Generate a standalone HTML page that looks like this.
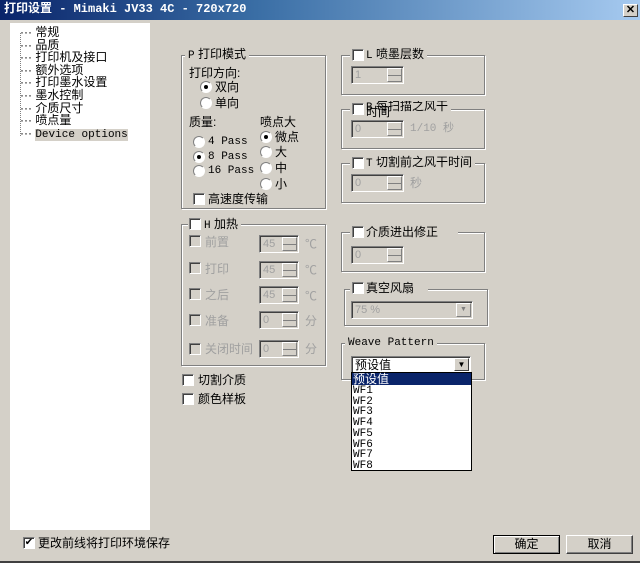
<!DOCTYPE html>
<html><head><meta charset="utf-8"><style>
*{margin:0;padding:0;box-sizing:border-box}
body{width:640px;height:563px;background:#d4d0c8;font:12px "Liberation Sans","Noto Sans CJK SC",sans-serif;color:#000;position:relative;overflow:hidden}
.a{position:absolute;white-space:nowrap;line-height:13px}
.mono{font-family:"Liberation Mono","Noto Sans CJK SC",monospace;font-size:11px}
.g{position:absolute;border:1px solid #808080;box-shadow:1px 1px 0 #fff, inset 1px 1px 0 #fff}
.lbl{position:absolute;background:#d4d0c8;padding:0 3px;line-height:13px;white-space:nowrap}
.cb{position:absolute;width:12px;height:12px;background:#fff;border:1px solid;border-color:#808080 #fff #fff #808080;box-shadow:inset 1px 1px 0 #404040}
.cb.dis{background:#d4d0c8}
.rd{position:absolute;width:12px;height:12px;border-radius:50%;background:#fff;border:1px solid;border-color:#808080 #fff #fff #808080}
.rd.on::after{content:"";position:absolute;left:3px;top:3px;width:4px;height:4px;border-radius:50%;background:#000}
.gr{color:#a0a0a0}
.sp{position:absolute;height:18px;background:#d4d0c8;border:1px solid;border-color:#808080 #fff #fff #808080;box-shadow:inset 1px 1px 0 #404040;font-size:11px;color:#a0a0a0;padding:2px 3px;line-height:12px}
.sp i{position:absolute;right:1px;top:1px;width:15px;height:14px;border:1px solid;border-color:#fff #808080 #808080 #fff;background:#d4d0c8}
.sp i::after{content:"";position:absolute;left:0;right:0;top:6px;border-top:1px solid #808080}
.sp b{position:absolute;right:1px;top:1px;width:15px;height:14px;border:1px solid;border-color:#fff #808080 #808080 #fff;background:#d4d0c8;font-size:7px;line-height:12px;text-align:center;color:#808080;font-weight:normal}
.btn{position:absolute;height:19px;border:1px solid #000;box-shadow:inset 1px 1px 0 #fff,inset -1px -1px 0 #808080;text-align:center;line-height:16px;font-size:12px}
</style></head><body>
<div style="position:absolute;left:0;top:0;width:640px;height:20px;background:linear-gradient(90deg,#0a246a,#3a6ea5 40%,#a6caf0)"></div>
<div class="a" style="left:4px;top:3px;color:#fff;font-weight:bold;font-size:12px;font-family:'Liberation Mono','Noto Sans CJK SC',monospace">打印设置 - Mimaki JV33 4C - 720x720</div>
<div style="position:absolute;left:623px;top:4px;width:15px;height:13px;background:#d4d0c8;border:1px solid;border-color:#fff #404040 #404040 #fff;text-align:center;font:bold 11px/11px 'Liberation Sans',sans-serif">✕</div>

<div style="position:absolute;left:10px;top:23px;width:140px;height:507px;background:#fff"></div>
<div style="position:absolute;left:20px;top:33px;height:103px;border-left:1px dotted #808080"></div>
<div style="position:absolute;left:20px;top:26px;font-size:12px;line-height:12.6px">
<div>··· 常规</div><div>··· 品质</div><div>··· 打印机及接口</div><div>··· 额外选项</div><div>··· 打印墨水设置</div><div>··· 墨水控制</div><div>··· 介质尺寸</div><div>··· 喷点量</div><div>··· <span class="mono" style="background:#d4d0c8">Device options</span></div>
</div>

<div class="g" style="left:181px;top:55px;width:145px;height:154px"></div>
<div class="lbl" style="left:185px;top:48px"><span class="mono">P</span> 打印模式</div>
<div class="a" style="left:189px;top:67px">打印方向:</div>
<div class="rd on" style="left:200px;top:81px"></div><div class="a" style="left:215px;top:81px">双向</div>
<div class="rd" style="left:200px;top:97px"></div><div class="a" style="left:215px;top:97px">单向</div>
<div class="a" style="left:189px;top:116px">质量:</div><div class="a" style="left:260px;top:116px">喷点大</div>
<div class="rd" style="left:193px;top:136px"></div><div class="a mono" style="left:208px;top:136px">4 Pass</div>
<div class="rd on" style="left:193px;top:151px"></div><div class="a mono" style="left:208px;top:151px">8 Pass</div>
<div class="rd" style="left:193px;top:165px"></div><div class="a mono" style="left:208px;top:165px">16 Pass</div>
<div class="rd on" style="left:260px;top:131px"></div><div class="a" style="left:275px;top:131px">微点</div>
<div class="rd" style="left:260px;top:146px"></div><div class="a" style="left:275px;top:146px">大</div>
<div class="rd" style="left:260px;top:162px"></div><div class="a" style="left:275px;top:162px">中</div>
<div class="rd" style="left:260px;top:178px"></div><div class="a" style="left:275px;top:178px">小</div>
<div class="cb" style="left:193px;top:193px"></div><div class="a" style="left:208px;top:193px">高速度传输</div>

<div class="g" style="left:181px;top:224px;width:145px;height:142px"></div>
<div class="lbl" style="left:188px;top:218px;padding-left:16px"><span class="mono">H</span> 加热</div>
<div class="cb" style="left:189px;top:218px"></div>
<div class="cb dis" style="left:189px;top:235px"></div><div class="a gr" style="left:205px;top:236px">前置</div><div class="sp" style="left:259px;top:235px;width:40px">45<i></i></div><div class="a gr" style="left:305px;top:238px">℃</div>
<div class="cb dis" style="left:189px;top:262px"></div><div class="a gr" style="left:205px;top:263px">打印</div><div class="sp" style="left:259px;top:261px;width:40px">45<i></i></div><div class="a gr" style="left:305px;top:264px">℃</div>
<div class="cb dis" style="left:189px;top:288px"></div><div class="a gr" style="left:205px;top:289px">之后</div><div class="sp" style="left:259px;top:286px;width:40px">45<i></i></div><div class="a gr" style="left:305px;top:290px">℃</div>
<div class="cb dis" style="left:189px;top:314px"></div><div class="a gr" style="left:205px;top:315px">准备</div><div class="sp" style="left:259px;top:311px;width:40px">0<i></i></div><div class="a gr" style="left:305px;top:315px">分</div>
<div class="cb dis" style="left:189px;top:343px"></div><div class="a gr" style="left:205px;top:343px">关闭时间</div><div class="sp" style="left:259px;top:340px;width:40px">0<i></i></div><div class="a gr" style="left:305px;top:343px">分</div>

<div class="cb" style="left:182px;top:374px"></div><div class="a" style="left:198px;top:374px">切割介质</div>
<div class="cb" style="left:182px;top:393px"></div><div class="a" style="left:198px;top:393px">颜色样板</div>

<div class="g" style="left:341px;top:55px;width:144px;height:40px"></div>
<div class="lbl" style="left:350px;top:48px;padding-left:16px"><span class="mono">L</span> 喷墨层数</div><div class="cb" style="left:352px;top:49px"></div>
<div class="sp" style="left:351px;top:66px;width:53px">1<i></i></div>

<div class="g" style="left:341px;top:109px;width:144px;height:40px"></div>
<div class="lbl" style="left:350px;top:101px;padding-left:16px;line-height:10px;height:13px;overflow:hidden"><span class="mono">B</span> 每扫描之风干</div><div class="cb" style="left:352px;top:103px"></div>
<div class="a" style="left:366px;top:106px">时间</div>
<div class="sp" style="left:351px;top:120px;width:53px">0<i></i></div><div class="a gr mono" style="left:410px;top:123px">1/10 秒</div>

<div class="g" style="left:341px;top:163px;width:144px;height:40px"></div>
<div class="lbl" style="left:350px;top:156px;padding-left:16px"><span class="mono">T</span> 切割前之风干时间</div><div class="cb" style="left:352px;top:157px"></div>
<div class="sp" style="left:351px;top:174px;width:53px">0<i></i></div><div class="a gr" style="left:410px;top:177px">秒</div>

<div class="g" style="left:341px;top:232px;width:144px;height:40px"></div>
<div class="lbl" style="left:350px;top:226px;padding-left:16px;padding-right:20px">介质进出修正</div><div class="cb" style="left:352px;top:226px"></div>
<div class="sp" style="left:351px;top:246px;width:53px">0<i></i></div>

<div class="g" style="left:344px;top:289px;width:144px;height:37px"></div>
<div class="lbl" style="left:350px;top:282px;padding-left:16px;padding-right:14px">真空风扇</div><div class="cb" style="left:352px;top:282px"></div>
<div class="sp" style="left:351px;top:301px;width:122px">75 %<b>▼</b></div>

<div class="g" style="left:341px;top:343px;width:144px;height:37px"></div>
<div class="lbl mono" style="left:345px;top:337px">Weave Pattern</div>
<div style="position:absolute;left:351px;top:356px;width:120px;height:17px;background:#fff;border:1px solid;border-color:#808080 #fff #fff #808080;box-shadow:inset 1px 1px 0 #404040;padding:1px 3px;line-height:14px">预设值
<div style="position:absolute;right:1px;top:1px;width:15px;height:13px;background:#d4d0c8;border:1px solid;border-color:#fff #404040 #404040 #fff;font-size:8px;text-align:center;line-height:11px">▼</div></div>
<div style="position:absolute;left:351px;top:372px;width:121px;height:99px;background:#fff;border:1px solid #000;font-size:11px;line-height:11px">
<div style="background:#0a246a;color:#fff;height:12px;padding-left:1px;font-size:12px;line-height:12px">预设值</div>
<div class="mono" style="padding-left:1px;line-height:10.7px;margin-top:1px">WF1<br>WF2<br>WF3<br>WF4<br>WF5<br>WF6<br>WF7<br>WF8</div>
</div>

<div class="cb" style="left:23px;top:537px;text-align:center;font-size:10px;line-height:10px">✔</div>
<div class="a" style="left:38px;top:537px">更改前线将打印环境保存</div>
<div class="btn" style="left:493px;top:535px;width:67px">确定</div>
<div class="btn" style="left:566px;top:535px;width:67px;border-color:#fff #404040 #404040 #fff;box-shadow:inset -1px -1px 0 #808080">取消</div>
<div style="position:absolute;left:0;top:561px;width:640px;height:2px;background:#404040"></div>
</body></html>
